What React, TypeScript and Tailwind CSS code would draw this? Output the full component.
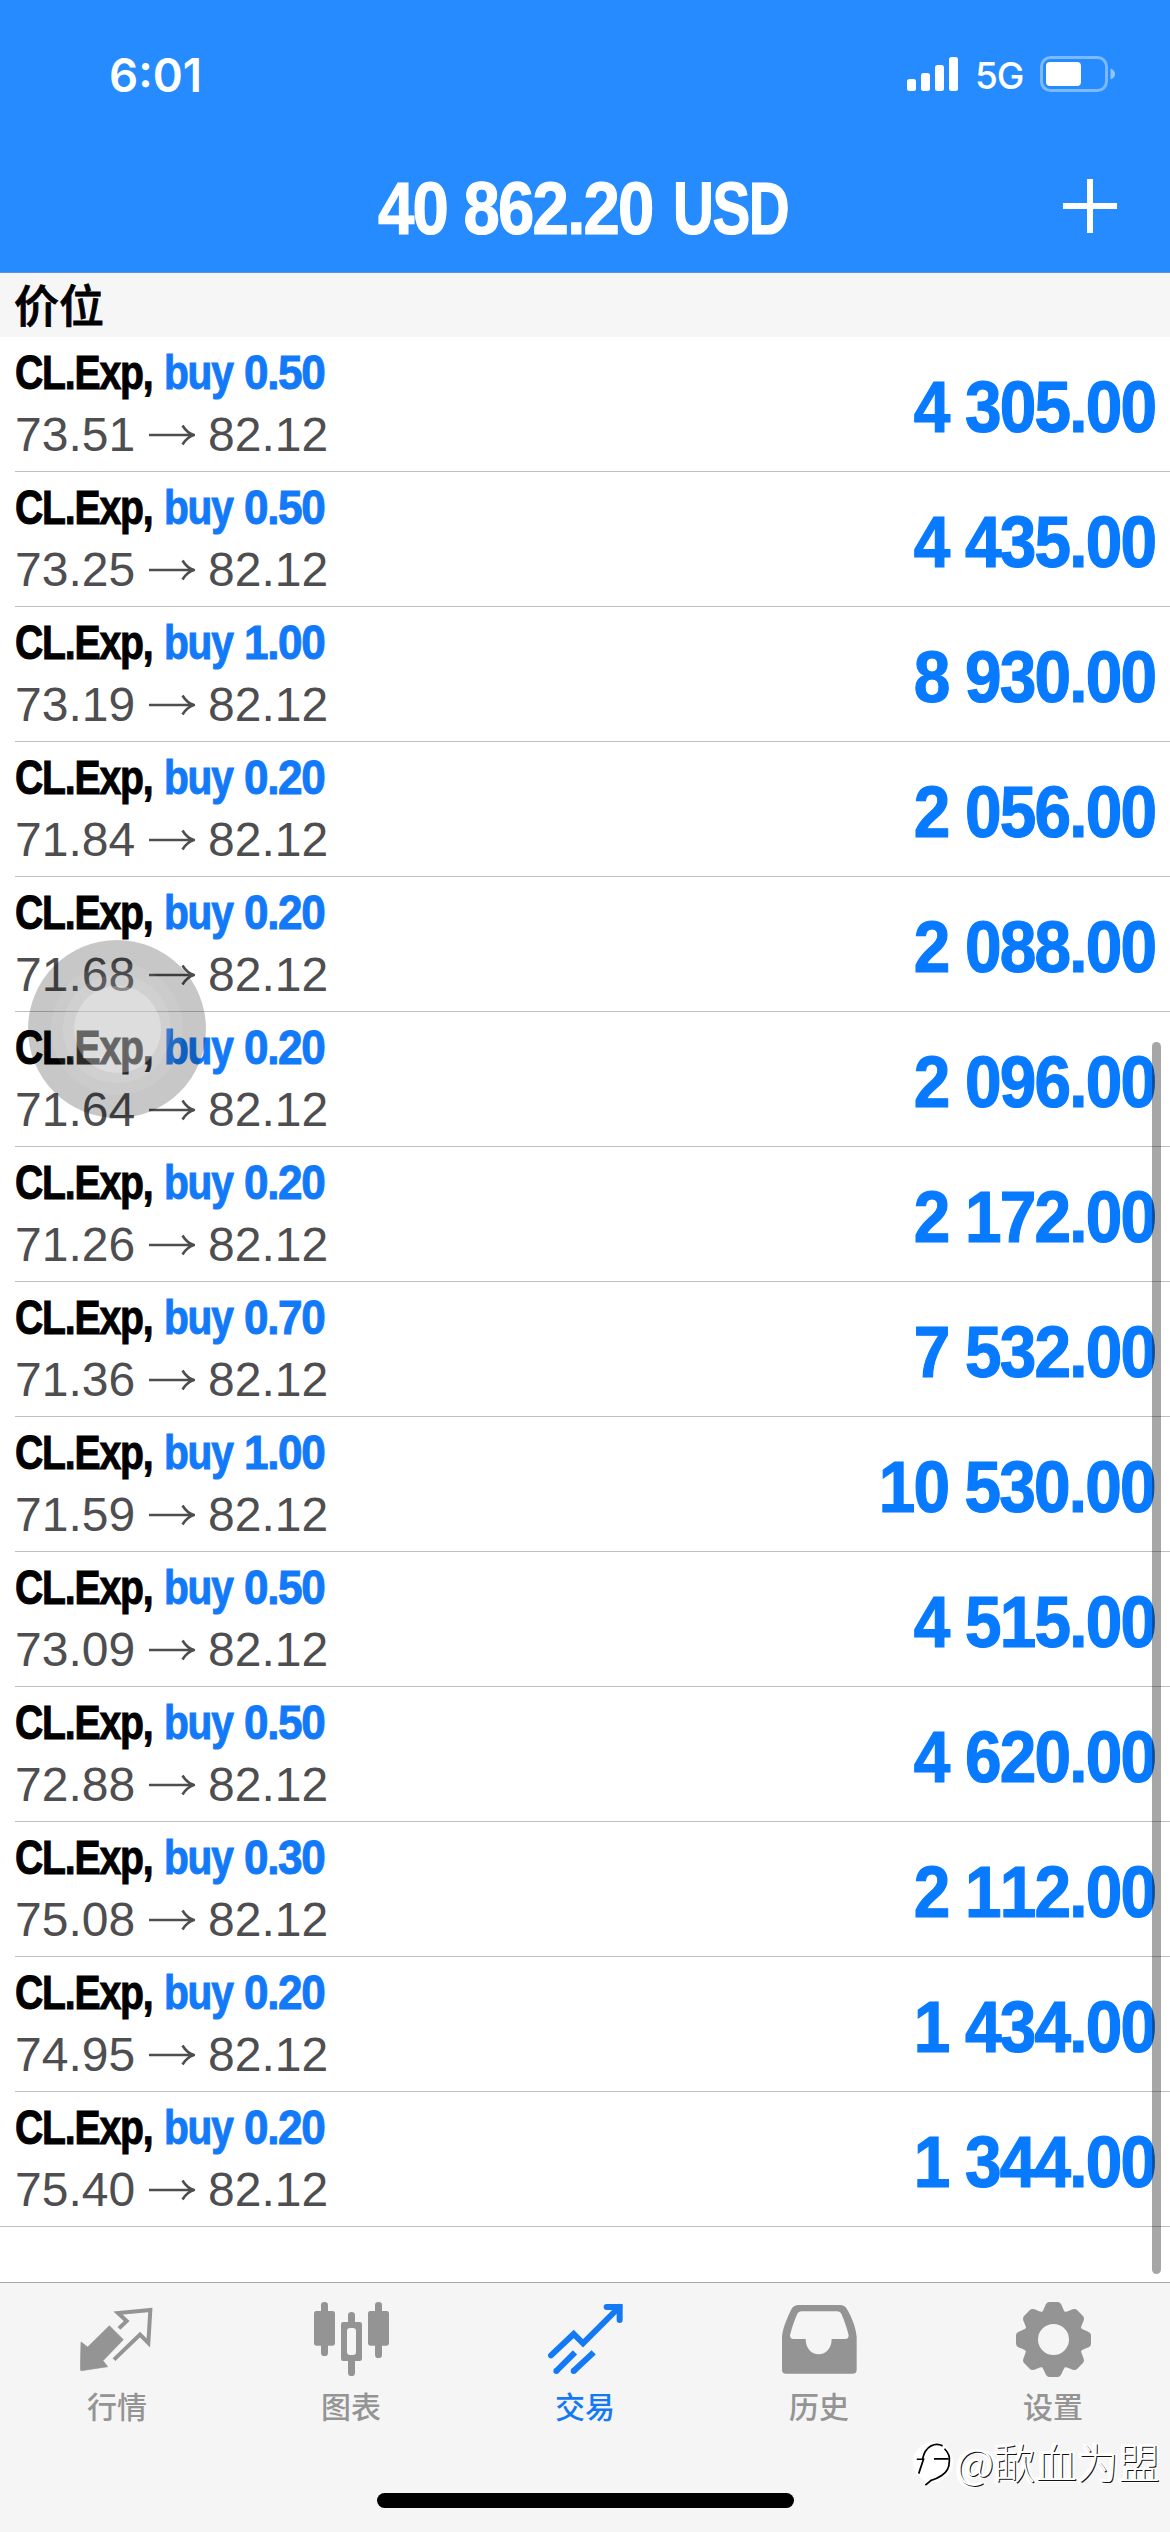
import type { ReactNode } from "react";

const positions = [
  ["0.50", "73.51", "4 305.00"],
  ["0.50", "73.25", "4 435.00"],
  ["1.00", "73.19", "8 930.00"],
  ["0.20", "71.84", "2 056.00"],
  ["0.20", "71.68", "2 088.00"],
  ["0.20", "71.64", "2 096.00"],
  ["0.20", "71.26", "2 172.00"],
  ["0.70", "71.36", "7 532.00"],
  ["1.00", "71.59", "10 530.00"],
  ["0.50", "73.09", "4 515.00"],
  ["0.50", "72.88", "4 620.00"],
  ["0.30", "75.08", "2 112.00"],
  ["0.20", "74.95", "1 434.00"],
  ["0.20", "75.40", "1 344.00"],
];

function StatusBar() {
  return (
    <div className="flex h-[147px] items-start justify-between pr-[54px] pl-[109px] text-white">
      <span className="mt-[47px] origin-left scale-x-[0.99] font-['Inter'] text-[46px] leading-[56px] font-semibold">6:01</span>
      <div className="mt-[54px] flex h-10 items-center">
        <svg width="52" height="34" viewBox="0 0 52 34" fill="currentColor">
          <rect x="0" y="22" width="9" height="12" rx="2.5" />
          <rect x="14" y="16" width="9" height="18" rx="2.5" />
          <rect x="28" y="8" width="9" height="26" rx="2.5" />
          <rect x="42" y="0" width="9" height="34" rx="2.5" />
        </svg>
        <span className="mt-1 ml-4 w-[65px] font-['Inter'] text-[37px] leading-10 font-medium tracking-[-1px]">5G</span>
        <svg width="76" height="36" viewBox="0 0 76 36" fill="none">
          <rect x="1.5" y="1.5" width="65" height="33" rx="9" stroke="white" strokeOpacity="0.4" strokeWidth="3" />
          <rect x="6" y="6" width="35" height="24" rx="4" fill="white" />
          <path d="M70.5 12.5Q75 14 75 18T70.5 23.5Z" fill="white" fillOpacity="0.5" />
        </svg>
      </div>
    </div>
  );
}

function Header() {
  return (
    <header className="h-[273px] border-b border-[#5f92cf] bg-[#258bff]">
      <StatusBar />
      <div className="grid grid-cols-[378px_1fr_380px] text-white">
        <span />
        <h1 className="flex h-[121px] text-[75px] leading-[123px] font-bold tracking-[-2px] whitespace-nowrap [-webkit-text-stroke:1.2px_white]">
          <span className="w-[295px]">
            <span className="inline-block origin-left scale-x-[0.87]">40 862.20</span>
          </span>
          <span className="inline-block w-[118px] origin-left scale-x-[0.755]">USD</span>
        </h1>
        <svg className="mt-[32px] mr-[54px] justify-self-end" width="54" height="54" viewBox="0 0 54 54" stroke="white" strokeWidth="6">
          <path d="M27 0V54M0 27H54" />
        </svg>
      </div>
    </header>
  );
}

function Row({ volume, open, profit, last }: { volume: string; open: string; profit: string; last: boolean }) {
  return (
    <li className={last ? "border-b border-[#bfbfbf]" : "pl-[15px]"}>
      <div className={last ? "flex h-[134px] justify-between pr-[15px] pl-[15px]" : "flex h-[135px] justify-between border-b border-[#bfbfbf] pr-[15px]"}>
        <div className="pt-[3px]">
          <div className="grid h-[62px] grid-cols-[149px_80px_100px] text-[49px] leading-[64px] font-bold tracking-[-1.5px] whitespace-nowrap text-[#127af8] [-webkit-text-stroke:1px_currentColor]">
            <span className="origin-left scale-x-[0.8] text-black">CL.Exp,</span>
            <span className="origin-left scale-x-[0.83]">buy</span>
            <span className="origin-left scale-x-[0.9]">{volume}</span>
          </div>
          <div className="grid h-[64px] grid-cols-[134px_59px_130px] items-center text-[48px] leading-[66px] whitespace-nowrap text-[#4e4e51]">
            <span>{open}</span>
            <svg width="46" height="22" viewBox="0 0 46 22" fill="none" stroke="currentColor" strokeWidth="2.6">
              <path d="M0 11H44M33.500 1.500Q38 9 45 11Q38 13 33.500 20.500" />
            </svg>
            <span>82.12</span>
          </div>
        </div>
        <span className="origin-right scale-x-[0.9] text-[73px] leading-[139px] font-bold tracking-[-2px] whitespace-nowrap text-[#077aff] [font-kerning:none] [-webkit-text-stroke:1.2px_#077aff]">
          {profit}
        </span>
      </div>
    </li>
  );
}

function TabIcon({ children }: { children: ReactNode }) {
  return (
    <svg width="75" height="75" viewBox="0 0 225 225" fill="currentColor">
      {children}
    </svg>
  );
}

const tabs = [
  {
    label: "行情",
    icon: (
      <TabIcon>
        <path d="M3 120L23 135L88 71L130 113L69 176L83 194L4 206Q1 206 1 202Z" stroke="currentColor" strokeWidth="2" strokeLinejoin="round" />
        <path d="M117 79L140 57L114 33L211 24L205 123L180 98L102 173" fill="none" stroke="currentColor" strokeWidth="12" />
      </TabIcon>
    ),
  },
  {
    label: "图表",
    icon: (
      <TabIcon>
        <rect x="0" y="27" width="63" height="104" rx="7" />
        <rect x="21" y="0" width="21" height="162" rx="10" />
        <path fillRule="evenodd" d="M88 60H102V40Q102 30 112.500 30T123 40V60H137Q144 60 144 67V170Q144 177 137 177H123V212Q123 222 112.500 222T102 212V177H88Q81 177 81 170V67Q81 60 88 60ZM108 78Q99 78 99 87V150Q99 159 108 159H117Q126 159 126 150V87Q126 78 117 78Z" />
        <rect x="162" y="27" width="63" height="104" rx="7" />
        <rect x="183" y="0" width="21" height="168" rx="10" />
      </TabIcon>
    ),
  },
  {
    label: "交易",
    active: true,
    icon: (
      <TabIcon>
        <g fill="none" stroke="currentColor" strokeWidth="18" strokeLinecap="round">
          <path d="M9 160L77 96L105 124L214 15" />
          <path d="M176 15H215V54" />
        </g>
        <g fill="none" stroke="currentColor" strokeWidth="18">
          <path d="M25 207L81 151M77 207L137 151" />
          <path d="M25 207h.1M77 207h.1" strokeLinecap="round" />
        </g>
      </TabIcon>
    ),
  },
  {
    label: "历史",
    icon: (
      <TabIcon>
        <path fillRule="evenodd" d="M0 105C2 75 20 38 29 20Q36 9 50 9H174Q188 9 194 20C206 38 222 75 224 105V203Q224 215 212 215H12Q0 215 0 203ZM24 100C30 75 38 55 44 40Q48 28 60 28H164Q176 28 180 40C186 55 194 75 200 100Q200 111 190 111H149C149 140 131 157 110 157C89 157 71 140 71 111H34Q24 111 24 100Z" />
      </TabIcon>
    ),
  },
  {
    label: "设置",
    icon: (
      <TabIcon>
        {[0, 45, 90, 135, 180, 225, 270, 315].map((a) => (
          <path key={a} transform={`rotate(${a} 112.5 112.5)`} d="M74 34Q82 28 86 15Q91 0 100 0H125Q134 0 139 15Q143 28 151 34L130 60H95Z" />
        ))}
        <circle cx="112.5" cy="112.5" r="67" fill="none" stroke="currentColor" strokeWidth="41" />
      </TabIcon>
    ),
  },
];

function Watermark() {
  return (
    <div className="absolute right-[10px] bottom-[42px] flex items-center text-white">
      <svg className="mt-2" width="44" height="50" viewBox="0 0 46 50" fill="none">
        <circle cx="22" cy="22" r="21" fill="white" />
        <path d="M14 46L20 30L40 28Q32 42 14 46Z" fill="white" />
        <path d="M11 19Q13 9 20 5Q26 2 32 5M34 8Q40 14 39 21Q39 31 31 36Q25 40 20 41L14 46M5 19H12L7 34M23 18.500H38" stroke="black" strokeWidth="1.8" />
      </svg>
      <span className="font-['Noto_Sans_CJK_SC',sans-serif] text-[41.500px] leading-[52px] font-light whitespace-nowrap [text-shadow:1px_1px_0_#111,-2px_-1px_0_#fff,-2px_2px_1px_#fff,3px_0_1px_#fff]">
        @歃血为盟
      </span>
    </div>
  );
}

export default function App() {
  return (
    <div className="relative flex h-[2532px] w-[1170px] flex-col overflow-hidden bg-white font-['Liberation_Sans','Noto_Sans_CJK_SC',sans-serif]">
      <Header />
      <h2 className="h-16 bg-[#f6f6f6] pl-[14px] font-['Noto_Sans_CJK_SC',sans-serif] text-[45px] leading-[62px] font-medium text-black [-webkit-text-stroke:0.8px_black]">价位</h2>
      <ul>
        {positions.map(([volume, open, profit], i) => (
          <Row key={i} volume={volume} open={open} profit={profit} last={i === positions.length - 1} />
        ))}
      </ul>

      <nav className="relative mt-auto h-[250px] border-t border-[#a9a9a9] bg-[#f5f5f5] pt-[19px]">
        <div className="grid grid-cols-5">
          {tabs.map((t) => (
            <div key={t.label} className={t.active ? "flex flex-col items-center text-[#1479f5]" : "flex flex-col items-center text-[#949494]"}>
              {t.icon}
              <span className="mt-1.5 font-['Noto_Sans_CJK_SC',sans-serif] text-[30px] leading-[44px] font-medium">{t.label}</span>
            </div>
          ))}
        </div>
        <div className="mx-auto mt-[66px] h-[15px] w-[417px] rounded-full bg-black" />
        <Watermark />
      </nav>

      <div className="absolute top-[1042px] right-[9px] h-[1232px] w-[9px] rounded-full bg-black/35" />
      <div className="absolute top-[940px] left-[28px] flex size-[178px] items-center justify-center rounded-full bg-black/22">
        <div className="flex size-[132px] items-center justify-center rounded-full bg-white/8">
          <div className="flex size-[108px] items-center justify-center rounded-full bg-white/10">
            <div className="size-[87px] rounded-full bg-white/27" />
          </div>
        </div>
      </div>
    </div>
  );
}
